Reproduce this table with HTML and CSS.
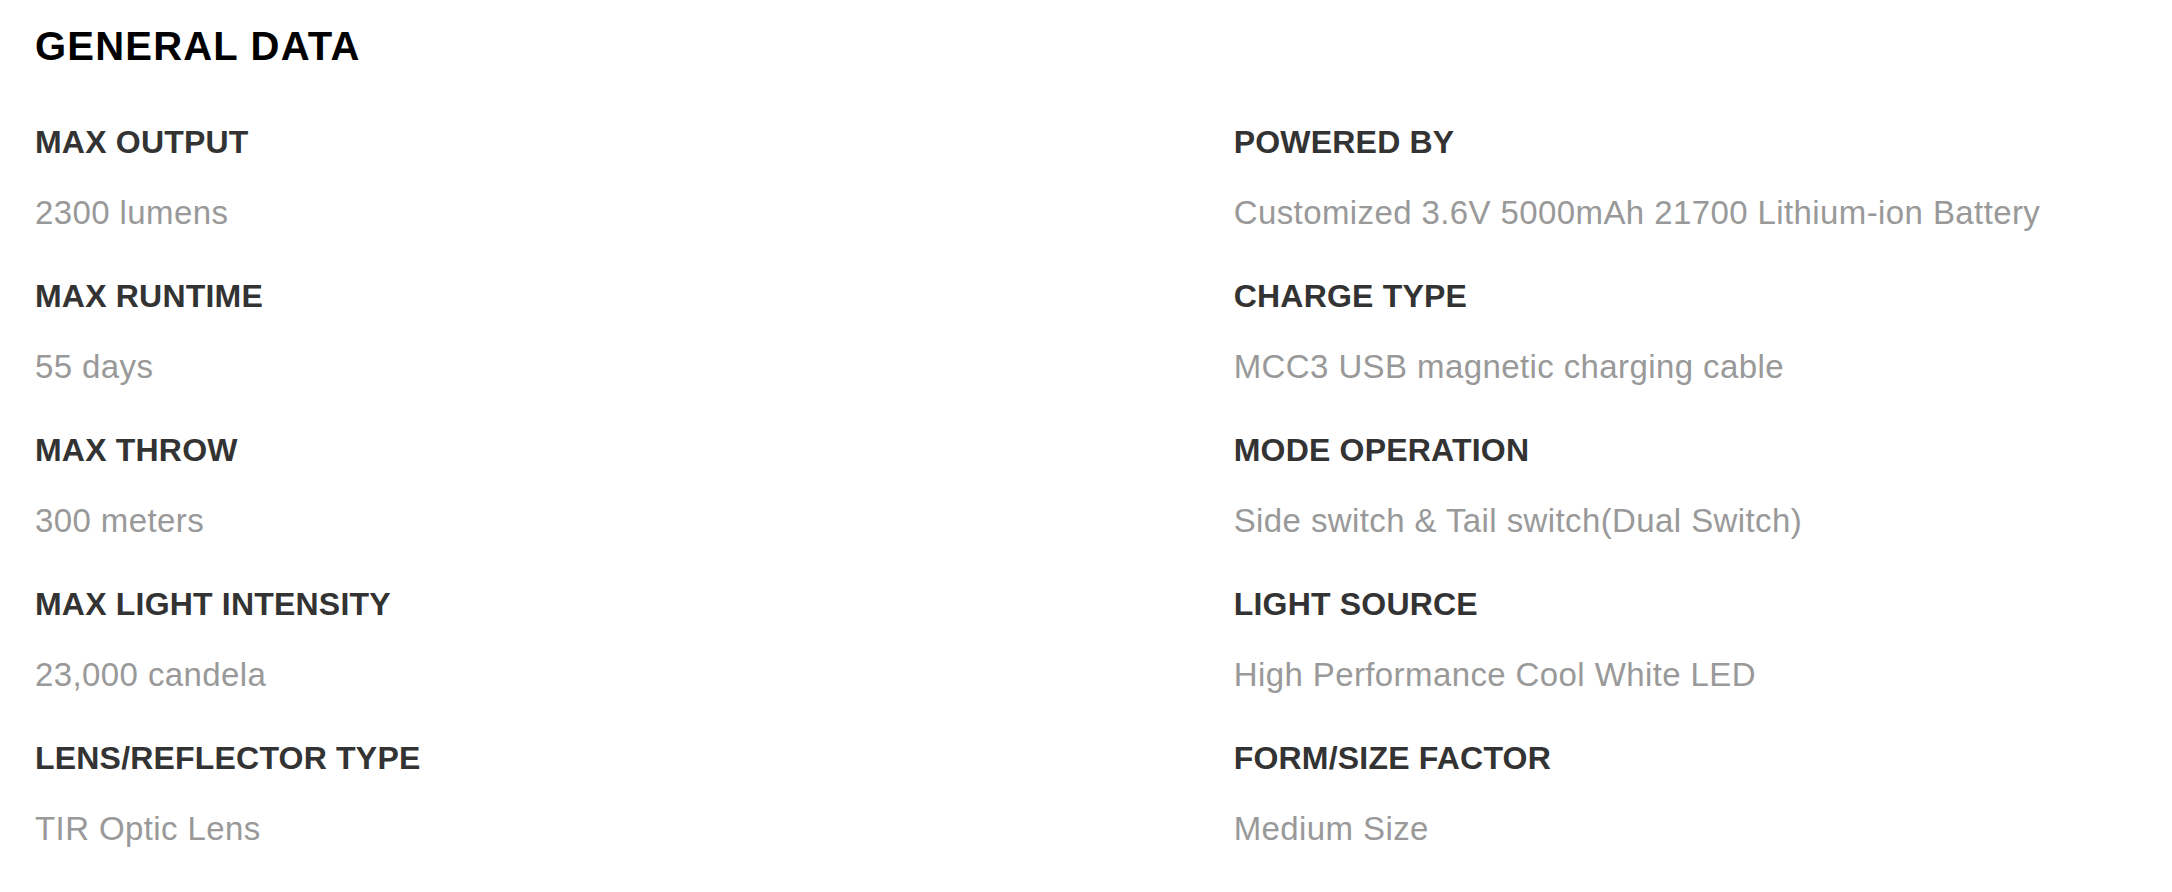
FILE: index.html
```html
<!DOCTYPE html>
<html lang="en">
<head>
<meta charset="utf-8">
<title>General Data</title>
<link rel="stylesheet" href="styles.css">
</head>
<body>
<section class="specs">
  <h2 class="specs-title">GENERAL DATA</h2>
  <div class="specs-grid">
    <div class="spec">
      <div class="spec-label">MAX OUTPUT</div>
      <div class="spec-value">2300 lumens</div>
    </div>
    <div class="spec">
      <div class="spec-label">POWERED BY</div>
      <div class="spec-value">Customized 3.6V 5000mAh 21700 Lithium-ion Battery</div>
    </div>
    <div class="spec">
      <div class="spec-label">MAX RUNTIME</div>
      <div class="spec-value">55 days</div>
    </div>
    <div class="spec">
      <div class="spec-label">CHARGE TYPE</div>
      <div class="spec-value">MCC3 USB magnetic charging cable</div>
    </div>
    <div class="spec">
      <div class="spec-label">MAX THROW</div>
      <div class="spec-value">300 meters</div>
    </div>
    <div class="spec">
      <div class="spec-label">MODE OPERATION</div>
      <div class="spec-value">Side switch &amp; Tail switch(Dual Switch)</div>
    </div>
    <div class="spec">
      <div class="spec-label">MAX LIGHT INTENSITY</div>
      <div class="spec-value">23,000 candela</div>
    </div>
    <div class="spec">
      <div class="spec-label">LIGHT SOURCE</div>
      <div class="spec-value">High Performance Cool White LED</div>
    </div>
    <div class="spec">
      <div class="spec-label">LENS/REFLECTOR TYPE</div>
      <div class="spec-value">TIR Optic Lens</div>
    </div>
    <div class="spec">
      <div class="spec-label">FORM/SIZE FACTOR</div>
      <div class="spec-value">Medium Size</div>
    </div>
  </div>
</section>
</body>
</html>
```

FILE: styles.css
```css
html, body {
  margin: 0;
  padding: 0;
  background: #ffffff;
}

body {
  font-family: "Liberation Sans", Arial, sans-serif;
}

.specs {
  padding: 22px 34px 0 35px;
}

.specs-title {
  margin: 0;
  font-size: 40px;
  line-height: 48px;
  font-weight: 700;
  letter-spacing: 1.2px;
  color: #000000;
}

.specs-grid {
  display: grid;
  grid-template-columns: 57fr 43fr;
  row-gap: 43px;
  margin-top: 52px;
}

.spec {
  display: flex;
  flex-direction: column;
  gap: 31px;
}

.spec-label {
  font-size: 32px;
  line-height: 40px;
  font-weight: 700;
  letter-spacing: 0.2px;
  color: #333333;
}

.spec-value {
  font-size: 33px;
  line-height: 40px;
  font-weight: 400;
  letter-spacing: 0.4px;
  color: #999999;
}
```
